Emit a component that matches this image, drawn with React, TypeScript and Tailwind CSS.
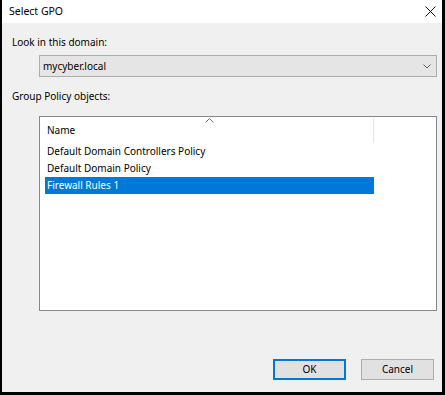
import React from "react";

const font = { fontFamily: "'Noto Sans', 'Liberation Sans', sans-serif" };

export default function App() {
  const rows = ["Default Domain Controllers Policy", "Default Domain Policy", "Firewall Rules 1"];
  const selected = 2;

  return (
    <div
      className="w-[445px] h-[395px] bg-black pl-[2px] pr-[3px] pb-[3px] flex flex-col text-[10px] text-black"
      style={font}
    >
      {/* TITLE BAR */}
      <div className="h-[23px] bg-white flex items-center justify-between pl-[7px] pr-[6px] shrink-0">
        <span className="text-[10.5px] leading-none">Select GPO</span>
        <svg width="11" height="11" viewBox="0 0 11 11">
          <path d="M0.5 0.5 L10.5 10.5 M10.5 0.5 L0.5 10.5" stroke="#111" strokeWidth="1" />
        </svg>
      </div>

      {/* BODY */}
      <div className="flex-1 bg-[#f0f0f0] flex flex-col pl-[10px] pr-[5px]">
        <div className="mt-[11px] h-[16px] leading-[16px]">Look in this domain:</div>

        {/* DOMAIN COMBO */}
        <div className="mt-[5px] ml-[27px] h-[22px] bg-[#e5e5e5] border border-[#adadad] flex items-center justify-between pl-[3px] pr-[5px]">
          <span>mycyber.local</span>
          <svg width="8" height="5" viewBox="0 0 8 5">
            <path d="M0.5 0.5 L4 4 L7.5 0.5" stroke="#606060" strokeWidth="1" fill="none" />
          </svg>
        </div>

        <div className="mt-[11px] h-[16px] leading-[16px]">Group Policy objects:</div>

        {/* GPO LIST */}
        <div className="mt-[12px] ml-[27px] h-[195px] bg-white border border-[#828790] flex flex-col pl-[5px] pt-[1px]">
          <div className="relative h-[25px] w-[329px] flex items-center pl-[2px]">
            <span>Name</span>
            <svg
              width="9"
              height="5"
              viewBox="0 0 9 5"
              className="absolute left-[160px] top-0"
            >
              <path d="M0.5 4.5 L4.5 0.5 L8.5 4.5" stroke="#707070" strokeWidth="1" fill="none" />
            </svg>
            <div className="absolute right-0 top-0 h-[25px] w-px bg-[#e5e5e5]" />
          </div>
          {rows.map((r, i) => (
            <div
              key={r}
              className={
                "h-[17px] w-[329px] flex items-center pl-[2px] " +
                (i === selected ? "bg-[#0078d7] text-white" : "")
              }
            >
              {r}
            </div>
          ))}
        </div>

        {/* BUTTONS */}
        <div className="mt-[48px] flex justify-end gap-[15px] pr-[3px]">
          <button className="w-[73px] h-[21px] bg-[#e1e1e1] border-2 border-[#0078d7] flex items-center justify-center">
            OK
          </button>
          <button className="w-[73px] h-[21px] bg-[#e1e1e1] border border-[#adadad] flex items-center justify-center">
            Cancel
          </button>
        </div>
      </div>
    </div>
  );
}
